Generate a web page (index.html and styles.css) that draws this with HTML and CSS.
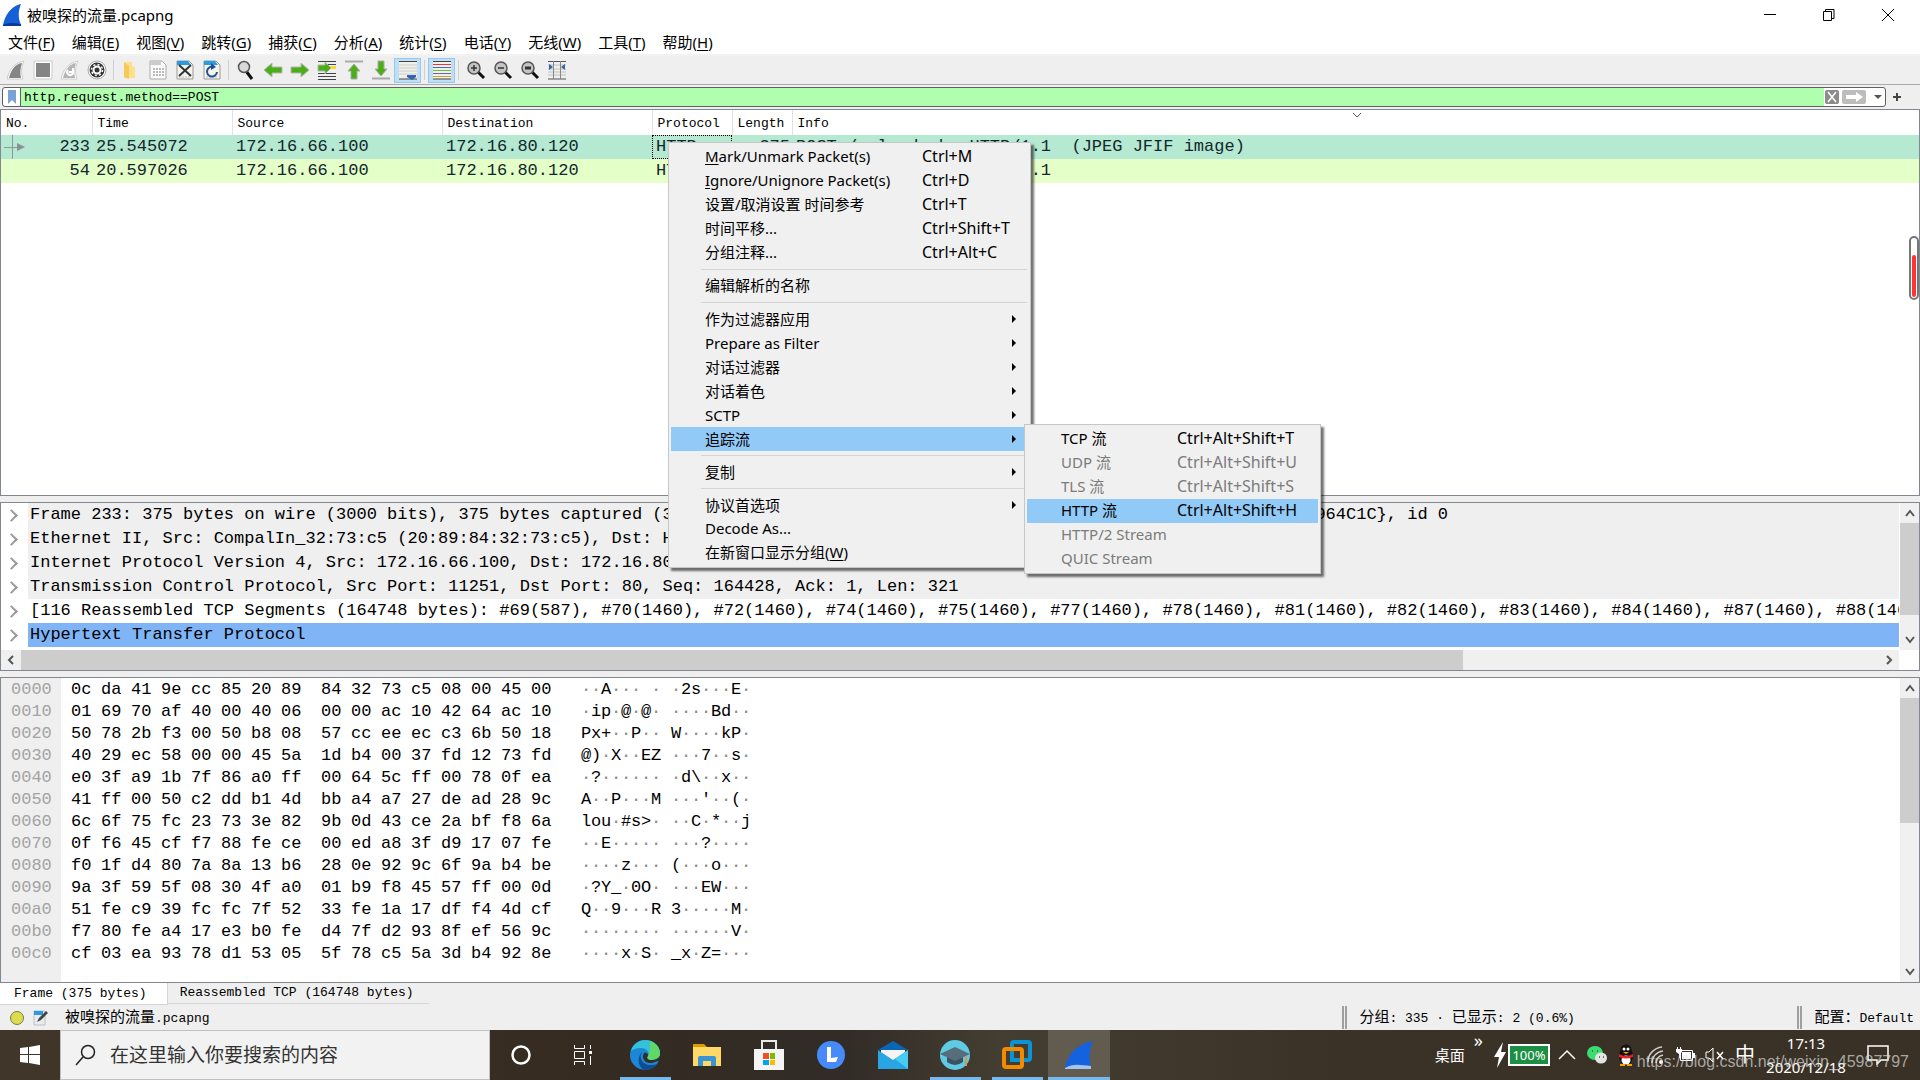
FILE: index.html
```html
<!DOCTYPE html>
<html lang="zh-CN">
<head>
    <meta charset="UTF-8">
    <meta name="viewport" content="width=device-width, initial-scale=1.0">
    <title>被嗅探的流量.pcapng</title>
    <link rel="stylesheet" href="styles.css">
</head>
<body>
    <header class="titlebar">
        <svg class="app-icon" width="20" height="24" viewBox="0 0 20 24"><path d="M1 22C3 12 9 3 19 1c-3 7-3 14 0 21z" fill="#1560d8"/><path d="M1 22c5-3 12-2 18-1v2H1z" fill="#0a3a9c"/></svg>
        <h1>被嗅探的流量.pcapng</h1>
        <div class="window-buttons">
            <button aria-label="最小化"><svg width="14" height="14"><path d="M1 6.500h12" stroke="#000" stroke-width="1"/></svg></button>
            <button aria-label="还原"><svg width="14" height="14"><path d="M1.500 3.500h8v9h-8zM3.500 3V1.500h8.500v9H10" fill="none" stroke="#000"/></svg></button>
            <button aria-label="关闭"><svg width="14" height="14"><path d="M1 1l12 12M13 1L1 13" stroke="#000"/></svg></button>
        </div>
    </header>

    <nav class="menubar">
        <button>文件(<u>F</u>)</button>
        <button>编辑(<u>E</u>)</button>
        <button>视图(<u>V</u>)</button>
        <button>跳转(<u>G</u>)</button>
        <button>捕获(<u>C</u>)</button>
        <button>分析(<u>A</u>)</button>
        <button>统计(<u>S</u>)</button>
        <button>电话(<u>Y</u>)</button>
        <button>无线(<u>W</u>)</button>
        <button>工具(<u>T</u>)</button>
        <button>帮助(<u>H</u>)</button>
    </nav>

    <div class="toolbar">
        <button aria-label="开始"><svg width="20" height="20"><path d="M1 19C3 10 8 3 18 1c-3 6-3 12-1 18z" fill="#fff" stroke="#ccc"/><path d="M3 18C5 10 9 4 16 3c-2 6-2 10-1 15z" fill="#858585"/></svg></button>
        <button aria-label="停止"><svg width="20" height="20"><path d="M1 1h18v18H1z" fill="#fff" stroke="#ccc"/><path d="M3 3h14v14H3z" fill="#858585"/></svg></button>
        <button aria-label="重新开始"><svg width="20" height="20"><path d="M1 19C3 10 8 3 18 1c-3 6-3 12-1 18z" fill="#fff" stroke="#ccc"/><path d="M3 18C5 10 9 4 16 3c-2 6-2 10-1 15z" fill="#b5b5b5"/><path d="M8 10a3 3 0 1 0 5 1M13 8v4H9" fill="none" stroke="#fff" stroke-width="2"/></svg></button>
        <button aria-label="捕获选项"><svg width="20" height="20"><circle cx="10" cy="10" r="9" fill="#fff" stroke="#aaa"/><circle cx="10" cy="10" r="7.500" fill="#333"/><circle cx="10" cy="10" r="3.500" fill="none" stroke="#fff" stroke-width="2"/><circle cx="10" cy="10" r="5.500" fill="none" stroke="#fff" stroke-width="1.500" stroke-dasharray="2 2.300"/></svg></button>
        <span class="divider"></span>
        <button aria-label="打开"><svg width="20" height="20"><path d="M3 2h8v4l3 1v11H3z" fill="#ffe08a"/><path d="M3 2l5 4v13l-5-2z" fill="#f5c95a"/></svg></button>
        <button aria-label="保存"><svg width="20" height="20"><path d="M2 1h12l4 4v14H2z" fill="#fbfbfb" stroke="#aaa"/><path d="M2 1h11v4H2z" fill="#ccc"/><path d="M5 9h11M5 12h11M5 15h11" stroke="#bbb" stroke-width="2" stroke-dasharray="2 1"/></svg></button>
        <button aria-label="关闭文件"><svg width="20" height="20"><path d="M2 1h12l4 4v14H2z" fill="#f6f5e8" stroke="#999"/><path d="M2 1h11l3 4H2z" fill="#2a9be0"/><path d="M4 17h12" stroke="#bbb" stroke-dasharray="2 1"/><path d="M4 5l12 11M16 5L4 16" stroke="#2c343c" stroke-width="2"/></svg></button>
        <button aria-label="重新加载"><svg width="20" height="20"><path d="M2 1h12l4 4v14H2z" fill="#f6f5e8" stroke="#999"/><path d="M2 1h11l3 4H2z" fill="#2a9be0"/><path d="M4 17h12" stroke="#bbb" stroke-dasharray="2 1"/><path d="M12 7a5 5 0 1 0 3 5" fill="none" stroke="#1f4f9a" stroke-width="2"/><path d="M9 3l5 4-5 3z" fill="#1f4f9a"/></svg></button>
        <span class="divider"></span>
        <button aria-label="查找"><svg width="20" height="20"><path d="M10 11l6 8" stroke="#111" stroke-width="3"/><circle cx="8" cy="7" r="5.500" fill="#d8d8d8" stroke="#555" stroke-width="1.500"/></svg></button>
        <button aria-label="后退"><svg width="20" height="20"><path d="M1 10l8-7v4h10v6H9v4z" fill="#4cae16" stroke="#b5b5b5"/></svg></button>
        <button aria-label="前进"><svg width="20" height="20"><path d="M19 10l-8-7v4H1v6h10v4z" fill="#4cae16" stroke="#b5b5b5"/></svg></button>
        <button aria-label="转到分组"><svg width="20" height="20"><path d="M1 1.500h18M8 4.500h11M1 13.500h18M1 16.500h18M1 19.500h18" stroke="#444"/><path d="M13 6h6v3h-6z" fill="#f6d936"/><path d="M14 8L8 2v3H1v6h7v3z" fill="#4cae16" stroke="#b5b5b5"/></svg></button>
        <button aria-label="首个分组"><svg width="20" height="20"><path d="M1 1.500h18" stroke="#aaa" stroke-width="2"/><path d="M10 4l6 7h-3v8H7v-8H4z" fill="#4cae16" stroke="#aaa"/></svg></button>
        <button aria-label="最新分组"><svg width="20" height="20"><path d="M1 18.500h18" stroke="#aaa" stroke-width="2"/><path d="M10 16l6-7h-3V1H7v8H4z" fill="#4cae16" stroke="#aaa"/></svg></button>
        <button class="pressed" aria-label="自动滚动"><svg width="20" height="20"><path d="M1 2h18v17H1z" fill="#f0f0ea"/><path d="M1 1.500h18M1 19h18" stroke="#444"/><path d="M1 5h18M1 8h18M1 11h18M1 14h18" stroke="#ccc"/><path d="M9 15h9v2l-4 3-5-3z" fill="#2f66b0"/></svg></button>
        <span class="divider"></span>
        <button class="pressed" aria-label="着色"><svg width="20" height="20"><path d="M1 2h18v17H1z" fill="#f0f0ea"/><path d="M1 1.500h18M1 19h18" stroke="#444"/><path d="M1 4.500h18" stroke="#e33"/><path d="M1 7.500h18" stroke="#3a70c8"/><path d="M1 10.500h18" stroke="#6cbf2e"/><path d="M1 13.500h18" stroke="#6c62ae"/><path d="M1 16.500h18" stroke="#c9a52f"/></svg></button>
        <span class="divider"></span>
        <button aria-label="放大"><svg width="20" height="20"><path d="M12 12l6 6" stroke="#111" stroke-width="3"/><circle cx="8" cy="8" r="6" fill="#c4c4c4" stroke="#555" stroke-width="1.500"/><path d="M5 8h6M8 5v6" stroke="#333" stroke-width="1.500"/></svg></button>
        <button aria-label="缩小"><svg width="20" height="20"><path d="M12 12l6 6" stroke="#111" stroke-width="3"/><circle cx="8" cy="8" r="6" fill="#c4c4c4" stroke="#555" stroke-width="1.500"/><path d="M5 8h6" stroke="#333" stroke-width="1.500"/></svg></button>
        <button aria-label="正常大小"><svg width="20" height="20"><path d="M12 12l6 6" stroke="#111" stroke-width="3"/><circle cx="8" cy="8" r="6" fill="#c4c4c4" stroke="#555" stroke-width="1.500"/><path d="M5 8h6" stroke="#333" stroke-width="3"/></svg></button>
        <button aria-label="调整列宽"><svg width="20" height="20"><path d="M1 1.500h18M1 19h18" stroke="#555"/><path d="M1 5h18M1 9h18M1 12h18M1 15h18" stroke="#c2c2b6"/><path d="M6.500 1v18M13.500 1v18" stroke="#888"/><path d="M2 4l4 3-4 3zM18 4l-4 3 4 3z" fill="#2f66b0"/></svg></button>
    </div>

    <form class="filter-row">
        <div class="filter-box">
            <button type="button" class="bookmark" aria-label="书签"><svg width="10" height="14"><path d="M1 0h8v14l-4-4-4 4z" fill="#7ba2d6"/></svg></button>
            <input type="text" class="filter-input" aria-label="显示过滤器" value="http.request.method==POST">
            <button type="button" class="clear" aria-label="清除"><svg width="14" height="14"><rect width="14" height="14" rx="2" fill="#8c8c8c"/><path d="M3 2l8 10M11 2L3 12" stroke="#fff" stroke-width="1.500"/></svg></button>
            <button type="button" aria-label="应用"><svg width="24" height="14"><rect width="24" height="14" rx="2" fill="#bdbdbd"/><path d="M4 5h10V2l7 5-7 5V9H4z" fill="#fff"/></svg></button>
            <button type="button" class="history" aria-label="历史"><svg width="8" height="4"><path d="M0 0h8L4 4z" fill="#555"/></svg></button>
        </div>
        <button type="button" class="add-filter" aria-label="添加"><svg width="10" height="10"><path d="M5 1v8M1 5h8" stroke="#444" stroke-width="2"/></svg></button>
    </form>

    <main class="panes">
        <section class="pane packet-list">
            <table>
                <colgroup>
                    <col class="c-no"><col class="c-time"><col class="c-addr"><col class="c-addr"><col class="c-proto"><col class="c-len"><col>
                </colgroup>
                <thead>
                    <tr><th>No.</th><th>Time</th><th>Source</th><th>Destination</th><th>Protocol</th><th>Length</th><th>Info</th></tr>
                </thead>
                <tbody>
                    <tr class="selected">
                        <td class="num"><svg class="related" width="24" height="24"><path d="M3 12.500h16M11.500 0v24" stroke="#8a9a9c"/><path d="M16 8l8 4-8 4z" fill="#8a8f98"/></svg>233</td>
                        <td>25.545072</td><td>172.16.66.100</td><td>172.16.80.120</td><td class="focus">HTTP</td><td class="num">375</td>
                        <td>POST /upload.php HTTP/1.1  (JPEG JFIF image)</td>
                    </tr>
                    <tr>
                        <td class="num">54</td>
                        <td>20.597026</td><td>172.16.66.100</td><td>172.16.80.120</td><td>HTTP</td><td class="num">640</td>
                        <td>POST /upload.php HTTP/1.1</td>
                    </tr>
                </tbody>
            </table>
            <svg class="sort-mark" width="10" height="6"><path d="M1 1l4 4 4-4" fill="none" stroke="#555"/></svg>
            <div class="gauge"><div class="gauge-level"></div></div>
        </section>

        <section class="pane details">
            <ul class="tree">
                <li><span>Frame 233: 375 bytes on wire (3000 bits), 375 bytes captured (3000 bits) on interface \Device\NPF_{5A1E7C02-61B4-4F0E-9C3D-7B1964C1C}, id 0</span></li>
                <li><span>Ethernet II, Src: CompalIn_32:73:c5 (20:89:84:32:73:c5), Dst: Hangzhou_9e:cc:85 (0c:da:41:9e:cc:85)</span></li>
                <li><span>Internet Protocol Version 4, Src: 172.16.66.100, Dst: 172.16.80.120</span></li>
                <li><span>Transmission Control Protocol, Src Port: 11251, Dst Port: 80, Seq: 164428, Ack: 1, Len: 321</span></li>
                <li class="plain"><span>[116 Reassembled TCP Segments (164748 bytes): #69(587), #70(1460), #72(1460), #74(1460), #75(1460), #77(1460), #78(1460), #81(1460), #82(1460), #83(1460), #84(1460), #87(1460), #88(1460),</span></li>
                <li class="current"><span>Hypertext Transfer Protocol</span></li>
            </ul>
            <div class="vscroll">
                <button aria-label="向上"><svg width="10" height="8"><path d="M1 7l4-5 4 5" fill="none" stroke="#555" stroke-width="2"/></svg></button>
                <div class="thumb details-thumb"></div>
                <button aria-label="向下"><svg width="10" height="8"><path d="M1 1l4 5 4-5" fill="none" stroke="#555" stroke-width="2"/></svg></button>
            </div>
            <div class="hscroll">
                <button aria-label="向左"><svg width="8" height="10"><path d="M6 1L2 5l4 4" fill="none" stroke="#555" stroke-width="2"/></svg></button>
                <div class="thumb"></div>
                <button aria-label="向右"><svg width="8" height="10"><path d="M2 1l4 4-4 4" fill="none" stroke="#555" stroke-width="2"/></svg></button>
            </div>
        </section>

        <section class="pane bytes">
            <div class="hex" id="hex"></div>
            <div class="vscroll">
                <button aria-label="向上"><svg width="10" height="8"><path d="M1 7l4-5 4 5" fill="none" stroke="#555" stroke-width="2"/></svg></button>
                <div class="thumb bytes-thumb"></div>
                <button aria-label="向下"><svg width="10" height="8"><path d="M1 1l4 5 4-5" fill="none" stroke="#555" stroke-width="2"/></svg></button>
            </div>
        </section>
    </main>

    <div class="tabs">
        <button class="tab active">Frame (375 bytes)</button>
        <button class="tab">Reassembled TCP (164748 bytes)</button>
    </div>

    <footer class="statusbar">
        <svg width="16" height="16"><circle cx="8" cy="8" r="6.500" fill="#dcdc50" stroke="#7c7c3c"/></svg>
        <svg width="16" height="16"><path d="M1 1h11v14H1z" fill="#e9ecec" stroke="#b8c0c4"/><path d="M1 1h9v4H1z" fill="#2a9be0"/><path d="M4 12l2-4 7-7 2 2-7 7z" fill="#444"/></svg>
        <span class="file-name"><span class="cjk">被嗅探的流量</span>.pcapng</span>
        <span class="status-part packets"><span class="cjk">分组</span>: 335 · <span class="cjk">已显示</span>: 2 (0.6%)</span>
        <span class="status-part"><span class="cjk">配置：</span>Default</span>
    </footer>

    <div class="taskbar">
        <button class="start" aria-label="开始菜单"><svg width="20" height="20"><path d="M0 3l8-1v7H0zM9 2l11-2v9H9zM0 10h8v8l-8-1zM9 10h11v10L9 18z" fill="#fff"/></svg></button>
        <label class="search">
            <svg width="22" height="22"><circle cx="13" cy="8" r="6.500" fill="none" stroke="#222" stroke-width="1.500"/><path d="M8 13l-7 8" stroke="#222" stroke-width="1.500"/></svg>
            <input type="text" placeholder="在这里输入你要搜索的内容" aria-label="搜索">
        </label>
        <button class="task" aria-label="Cortana"><svg width="22" height="22"><circle cx="11" cy="11" r="8.500" fill="none" stroke="#fff" stroke-width="2.500"/></svg></button>
        <button class="task" aria-label="任务视图"><svg width="22" height="22"><path d="M2.500 1v3.500h10V1M2.500 7.500h10v7h-10zM2.500 21v-3.500h10V21M18.500 1v4M18.500 12v9" fill="none" stroke="#fff"/><path d="M17 7h3v3h-3z" fill="#fff"/></svg></button>
        <button class="task running" aria-label="Edge"><svg width="30" height="30" viewBox="0 0 30 30"><circle cx="15" cy="15" r="15" fill="#1b87d6"/><path d="M1 11C3 4 9 0 15 0c9 0 15 6 15 13 0 5-4 7-8 7-4 0-6-2-4-4 2-3-1-8-7-8-4 0-8 1-10 3z" fill="#35c1d8"/><path d="M20 1c6 2 10 7 10 12 0 5-4 7-8 7-4 0-6-2-4-4 3-5 2-10 2-15z" fill="#5fd865"/><path d="M12 12c-4 6 1 14 10 13 3 0 5-1 6-2-4 6-9 7-13 7C9 29 6 18 12 12z" fill="#0e4d92"/><path d="M14 13c-3 5 1 11 8 10l6-2c2 1 2-3 2-5-3 4-7 4-9 4-3 0-5-2-3-4 1-2-2-4-4-3z" fill="#33302a"/></svg></button>
        <button class="task" aria-label="文件资源管理器"><svg width="30" height="26" viewBox="0 0 30 26"><path d="M1 2h11l3 3H1z" fill="#dc9c00"/><path d="M1 5h28v19H1z" fill="#ffd868"/><path d="M6 24V16q0-2 2-2h14q2 0 2 2v8h-5v-5h-8v5z" fill="#3b93d4"/></svg></button>
        <button class="task" aria-label="应用商店"><svg width="30" height="32" viewBox="0 0 30 32"><path d="M8 11V2h14v9" fill="none" stroke="#e8e8e8" stroke-width="2"/><path d="M0 10h30v21H0z" fill="#f4f4f4"/><path d="M9 14h6v6H9z" fill="#f25022"/><path d="M16 14h5v6h-5z" fill="#7fba00"/><path d="M9 21h6v5H9z" fill="#00a4ef"/><path d="M16 21h5v5h-5z" fill="#ffb900"/></svg></button>
        <button class="task" aria-label="联想"><svg width="28" height="28"><circle cx="14" cy="14" r="14" fill="#478bfb"/><path d="M10 6h4v11l7-1-2 5h-9z" fill="#fff"/></svg></button>
        <button class="task" aria-label="邮件"><svg width="30" height="30"><path d="M0 10L15 1l15 9z" fill="#0a66b4"/><path d="M3 10h24v10H3z" fill="#f4f4f4"/><path d="M0 10l15 10 15-10v19H0z" fill="#2aa5e4"/><path d="M30 10v19L17 19z" fill="#46cdf6"/></svg></button>
        <button class="task running" aria-label="学习"><svg width="30" height="30"><circle cx="15" cy="15" r="15" fill="#5fcae3"/><path d="M7 14h16v8q-8 6-16 0z" fill="#3b5360"/><path d="M15 7L0 14l15 7 15-7z" fill="#566d7b"/><path d="M26 16v10" stroke="#d9964a" stroke-width="2"/></svg></button>
        <button class="task running" aria-label="VMware"><svg width="30" height="30"><rect x="10" y="2" width="18" height="18" rx="2" fill="none" stroke="#0a94d6" stroke-width="4"/><rect x="2" y="9" width="18" height="18" rx="2" fill="none" stroke="#f38b00" stroke-width="4"/><path d="M10 14v6h6" fill="none" stroke="#0a94d6" stroke-width="4"/></svg></button>
        <button class="task running focused" aria-label="Wireshark"><svg width="30" height="30"><path d="M1 28C4 15 12 4 29 1c-4 8-4 18-2 27z" fill="#1462dd"/><path d="M1 28c8-5 16-3 26-2v3H1z" fill="#a8c3ee"/></svg></button>

        <div class="tray">
            <span>桌面</span>
            <span class="more">»</span>
            <svg width="12" height="28"><path d="M9 1L0 16h5L3 27l9-16H7z" fill="#fff"/></svg>
            <span class="battery">100%</span>
            <svg class="tray-icon" width="20" height="20"><path d="M2 14l8-8 8 8" fill="none" stroke="#fff" stroke-width="1.500"/></svg>
            <svg class="tray-icon" width="20" height="20"><ellipse cx="8" cy="8" rx="8" ry="7" fill="#3ddc70"/><ellipse cx="14" cy="13" rx="6" ry="5.500" fill="#e4e4e4"/><path d="M5 6h1M10 6h1M12 12h1M16 12h1" stroke="#26633b" stroke-width="1.500"/></svg>
            <svg class="tray-icon" width="18" height="22"><ellipse cx="9" cy="12" rx="7" ry="9" fill="#111"/><circle cx="9" cy="6" r="5.500" fill="#111"/><ellipse cx="9" cy="16" rx="4.500" ry="4.500" fill="#fff"/><path d="M2 10q7 4 14 0v3q-7 3-14 0z" fill="#e8222a"/><circle cx="7" cy="5" r="1.500" fill="#fff"/><circle cx="11" cy="5" r="1.500" fill="#fff"/><path d="M6 8h6l-3 2zM3 20h5v2H3zM10 20h5v2h-5z" fill="#f6a400"/></svg>
            <svg class="tray-icon" width="20" height="20"><path d="M3 17C3 9 9 3 17 2M7 18c0-6 4-11 11-12M11 18c0-4 3-7 7-8" fill="none" stroke="#ccc" stroke-width="1.500"/><circle cx="16" cy="17" r="2" fill="#fff"/></svg>
            <svg class="tray-icon" width="20" height="20"><path d="M5.500 5.500h12v10h-12z" fill="none" stroke="#fff"/><path d="M7 7h9v7H7zM18 8h2v5h-2z" fill="#fff"/><path d="M1 4h6v3L5 9v4H4V9L1 7z" fill="#fff"/><path d="M2.500 2v2M5.500 2v2" stroke="#fff"/></svg>
            <svg class="tray-icon" width="20" height="20"><path d="M1 7h3l4-4v14l-4-4H1z" fill="none" stroke="#fff"/><path d="M12 7l6 7M18 7l-6 7" stroke="#fff" stroke-width="1.500"/></svg>
            <span class="ime">中</span>
            <span class="clock"><span>17:13</span><span>2020/12/18</span></span>
            <svg class="notice" width="22" height="20"><path d="M1 1h20v14h-7l-4 4v-4H1z" fill="none" stroke="#fff" stroke-width="1.500"/></svg>
        </div>
        <span class="watermark">https://blog.csdn.net/weixin_45987797</span>
    </div>

    <ul class="menu context-menu">
        <li><button><span><u>M</u>ark/Unmark Packet(s)</span><kbd>Ctrl+M</kbd></button></li>
        <li><button><span><u>I</u>gnore/Unignore Packet(s)</span><kbd>Ctrl+D</kbd></button></li>
        <li><button><span>设置/取消设置 时间参考</span><kbd>Ctrl+T</kbd></button></li>
        <li><button><span>时间平移...</span><kbd>Ctrl+Shift+T</kbd></button></li>
        <li><button><span>分组注释...</span><kbd>Ctrl+Alt+C</kbd></button></li>
        <li class="line"></li>
        <li><button><span>编辑解析的名称</span></button></li>
        <li class="line"></li>
        <li><button class="parent"><span>作为过滤器应用</span></button></li>
        <li><button class="parent"><span>Prepare as Filter</span></button></li>
        <li><button class="parent"><span>对话过滤器</span></button></li>
        <li><button class="parent"><span>对话着色</span></button></li>
        <li><button class="parent"><span>SCTP</span></button></li>
        <li><button class="parent hover"><span>追踪流</span></button></li>
        <li class="line"></li>
        <li><button class="parent"><span>复制</span></button></li>
        <li class="line"></li>
        <li><button class="parent"><span>协议首选项</span></button></li>
        <li><button><span>Decode As...</span></button></li>
        <li><button><span>在新窗口显示分组(<u>W</u>)</span></button></li>
    </ul>

    <ul class="menu submenu">
        <li><button><span>TCP 流</span><kbd>Ctrl+Alt+Shift+T</kbd></button></li>
        <li><button disabled><span>UDP 流</span><kbd>Ctrl+Alt+Shift+U</kbd></button></li>
        <li><button disabled><span>TLS 流</span><kbd>Ctrl+Alt+Shift+S</kbd></button></li>
        <li><button class="hover"><span>HTTP 流</span><kbd>Ctrl+Alt+Shift+H</kbd></button></li>
        <li><button disabled><span>HTTP/2 Stream</span></button></li>
        <li><button disabled><span>QUIC Stream</span></button></li>
    </ul>

    <script>
        const dump = [
            '0c da 41 9e cc 85 20 89 84 32 73 c5 08 00 45 00',
            '01 69 70 af 40 00 40 06 00 00 ac 10 42 64 ac 10',
            '50 78 2b f3 00 50 b8 08 57 cc ee ec c3 6b 50 18',
            '40 29 ec 58 00 00 45 5a 1d b4 00 37 fd 12 73 fd',
            'e0 3f a9 1b 7f 86 a0 ff 00 64 5c ff 00 78 0f ea',
            '41 ff 00 50 c2 dd b1 4d bb a4 a7 27 de ad 28 9c',
            '6c 6f 75 fc 23 73 3e 82 9b 0d 43 ce 2a bf f8 6a',
            '0f f6 45 cf f7 88 fe ce 00 ed a8 3f d9 17 07 fe',
            'f0 1f d4 80 7a 8a 13 b6 28 0e 92 9c 6f 9a b4 be',
            '9a 3f 59 5f 08 30 4f a0 01 b9 f8 45 57 ff 00 0d',
            '51 fe c9 39 fc fc 7f 52 33 fe 1a 17 df f4 4d cf',
            'f7 80 fe a4 17 e3 b0 fe d4 7f d2 93 8f ef 56 9c',
            'cf 03 ea 93 78 d1 53 05 5f 78 c5 5a 3d b4 92 8e'
        ];

        function addSpan(parent, className, text) {
            const span = document.createElement('span');
            span.className = className;
            span.textContent = text;
            parent.appendChild(span);
            return span;
        }

        // One row: offset, two groups of eight bytes, then the same bytes as ASCII
        dump.forEach((line, i) => {
            const row = document.createElement('div');
            row.className = 'hex-row';
            addSpan(row, 'offset', (i * 16).toString(16).padStart(4, '0'));
            const bytes = line.split(' ');
            [bytes.slice(0, 8), bytes.slice(8)].forEach(half => {
                const group = addSpan(row, 'byte-group', '');
                half.forEach(b => addSpan(group, 'byte', b));
            });
            [bytes.slice(0, 8), bytes.slice(8)].forEach(half => {
                const group = addSpan(row, 'ascii', '');
                half.forEach(b => {
                    const code = parseInt(b, 16);
                    const printable = code >= 32 && code < 127;
                    addSpan(group, printable ? '' : 'dot', printable ? String.fromCharCode(code) : '·');
                });
            });
            document.getElementById('hex').appendChild(row);
        });
    </script>
</body>
</html>
```

FILE: styles.css
```css
* {
    margin: 0;
    padding: 0;
    box-sizing: border-box;
}

body {
    position: relative;
    display: flex;
    flex-direction: column;
    height: 100vh;
    overflow: hidden;
    background: #fff;
    color: #000;
    font: 15px/24px "Noto Sans", "Noto Sans CJK SC", sans-serif;
}

button,
input {
    border: none;
    background: none;
    color: inherit;
    font: inherit;
}

ul {
    list-style: none;
}

svg {
    display: block;
    flex: none;
}

u {
    text-underline-offset: 2px;
}

/* Title and menus */
.titlebar {
    display: flex;
    align-items: center;
    height: 29px;
    padding-left: 2px;
}

.titlebar h1 {
    flex: 1;
    margin-left: 5px;
    font-size: 15px;
    font-weight: normal;
}

.window-buttons {
    display: flex;
}

.window-buttons button {
    display: flex;
    justify-content: center;
    width: 59px;
}

.window-buttons button:last-child {
    margin-right: 3px;
}

.menubar {
    display: flex;
    gap: 1px;
    height: 27px;
    border-bottom: 2px solid #f2f2f2;
}

.menubar button {
    padding: 0 8px;
}

.toolbar {
    display: flex;
    align-items: center;
    height: 29px;
    padding-left: 2px;
    background: #efefef;
    border-bottom: 1px solid #a9a9a9;
}

.toolbar button {
    display: flex;
    align-items: center;
    justify-content: center;
    width: 27px;
    height: 25px;
}

.toolbar .pressed {
    background: #c2def5;
    border: 1px solid #90c8f6;
}

.divider {
    width: 1px;
    height: 20px;
    margin: 0 3px;
    background: #cfcfcf;
}

/* Display filter */
.filter-row {
    display: flex;
    align-items: center;
    height: 24px;
    padding: 1px 18px 1px 2px;
    background: #efefef;
}

.filter-box {
    display: flex;
    flex: 1;
    align-items: center;
    height: 20px;
    background: #fff;
    border: 1px solid #606060;
    border-radius: 3px;
    overflow: hidden;
}

.filter-box button {
    margin-left: 3px;
}

.filter-box .bookmark {
    display: flex;
    justify-content: center;
    width: 17px;
    margin: 0;
}

.filter-box .clear {
    margin-left: 1px;
}

.filter-input {
    flex: 1;
    align-self: stretch;
    padding-left: 3px;
    background: #afffaf;
    border-left: 1px solid #606060;
    font: 13px "Liberation Mono", monospace;
    outline: none;
}

.filter-box .history {
    padding: 0 3px 0 5px;
}

.add-filter {
    margin-left: 6px;
}

/* Three stacked panes */
.panes {
    display: flex;
    flex: 1;
    flex-direction: column;
    gap: 6px;
    min-height: 0;
    background: #efefef;
}

.pane {
    position: relative;
    background: #fff;
    border: 1px solid #828790;
    font: 17px/24px "Liberation Mono", monospace;
    overflow: hidden;
}

.packet-list {
    flex: 386 1 0;
}

.packet-list table {
    width: 100%;
    table-layout: fixed;
    border-collapse: collapse;
    white-space: pre;
}

.c-no {
    width: 91px;
}

.c-time {
    width: 140px;
}

.c-addr {
    width: 210px;
}

.c-proto {
    width: 80px;
}

.c-len {
    width: 60px;
}

.packet-list th {
    height: 25px;
    padding: 2px 0 0 5px;
    border-right: 1px solid #e2e2e2;
    font-size: 13px;
    font-weight: normal;
    line-height: 23px;
    text-align: left;
}

.packet-list th:last-child {
    border-right: none;
}

.packet-list td {
    position: relative;
    height: 24px;
    padding-left: 4px;
    color: #12272e;
}

.packet-list tbody tr {
    background: #e4ffc7;
}

.packet-list tbody .selected {
    background: #b6e9d1;
}

.packet-list .num {
    padding-right: 2px;
    text-align: right;
}

.packet-list .focus {
    outline: 1px dotted #000;
    outline-offset: -1px;
}

.related {
    position: absolute;
    top: 0;
    left: 0;
}

.sort-mark {
    position: absolute;
    top: 2px;
    right: 557px;
}

.gauge {
    position: absolute;
    top: 126px;
    right: 0;
    display: flex;
    align-items: flex-end;
    width: 10px;
    height: 64px;
    padding: 1px;
    background: #fff;
    border: 2px solid #777;
    border-radius: 5px;
}

.gauge-level {
    width: 100%;
    height: 42px;
    background: #f33;
    border-radius: 2px;
}

/* Packet details */
.details {
    display: grid;
    grid-template-columns: 1fr 20px;
    grid-template-rows: auto 20px;
}

.tree {
    min-width: 0;
    padding-bottom: 3px;
}

.tree li {
    display: flex;
    align-items: center;
}

.tree li::before {
    content: "";
    flex: none;
    width: 7px;
    height: 7px;
    margin: 0 12px 0 6px;
    border: solid #999;
    border-width: 2px 2px 0 0;
    transform: rotate(45deg);
}

.tree span {
    flex: 1;
    padding-left: 2px;
    background: #efefef;
    white-space: pre;
    overflow: hidden;
}

.tree .plain span {
    background: #fff;
}

.tree .current span {
    background: #7fb5f7;
}

.vscroll,
.hscroll {
    display: flex;
    background: #f0f0f0;
}

.vscroll {
    flex-direction: column;
    border-left: 1px solid #fff;
}

.vscroll button,
.hscroll button {
    display: flex;
    align-items: center;
    justify-content: center;
    width: 20px;
    height: 20px;
}

.vscroll button:last-child {
    margin-top: auto;
}

.hscroll button:last-child {
    margin-left: auto;
}

.thumb {
    background: #cdcdcd;
}

.details-thumb {
    height: 62%;
}

.bytes-thumb {
    height: 41%;
}

.hscroll .thumb {
    width: 76%;
}

/* Packet bytes */
.bytes {
    display: grid;
    grid-template-columns: 1fr 20px;
    flex: 304 1 0;
}

.hex {
    padding-top: 1px;
    background: linear-gradient(to right, #efefef 60px, #fff 60px);
    line-height: 22px;
}

.hex-row {
    display: grid;
    grid-template-columns: 70px 250px 260px 90px 90px;
    height: 22px;
}

.offset {
    padding-left: 10px;
    color: #a3a3a3;
}

.byte-group {
    display: grid;
    grid-template-columns: repeat(8, 30px);
}

.ascii {
    display: grid;
    grid-template-columns: repeat(8, 10px);
    white-space: pre;
}

.dot {
    color: #888;
}

/* Tabs and status */
.tabs {
    display: flex;
    align-items: flex-start;
    height: 22px;
    background: #efefef;
    font: 13px/20px "Liberation Mono", monospace;
}

.tab {
    padding: 0 15px 0 12px;
    border-bottom: 1px solid #d6d6d6;
}

.tab.active {
    padding: 0 20px 0 14px;
    background: #fff;
    border-right: 1px solid #d6d6d6;
    line-height: 21px;
}

.statusbar {
    display: flex;
    align-items: center;
    gap: 8px;
    height: 25px;
    padding: 0 6px 0 9px;
    background: #efefef;
    font: 13px/20px "Liberation Mono", monospace;
}

.cjk {
    font: 15px/20px "Noto Sans CJK SC", sans-serif;
}

.file-name {
    flex: 1;
    margin-left: 8px;
}

.status-part {
    padding-left: 12px;
    border-left: 5px double #a0a0a0;
}

.packets {
    flex: 0 0 447px;
}

/* Taskbar */
.taskbar {
    position: relative;
    display: flex;
    height: 50px;
    background: linear-gradient(to right, #40362a, #352b21 30%, #312c27 44%, #443d31 52%, #3a3226 70%, #393125);
    color: #fff;
}

.start {
    display: flex;
    align-items: center;
    justify-content: center;
    width: 60px;
}

.search {
    display: flex;
    align-items: center;
    width: 430px;
    padding-left: 14px;
    background: #f2f2f2;
    border: 1px solid #c0c0c0;
}

.search input {
    flex: 1;
    min-width: 0;
    padding-left: 13px;
    font-size: 19px;
    outline: none;
}

.search input::placeholder {
    color: #333;
    opacity: 1;
}

.task {
    display: flex;
    align-items: center;
    justify-content: center;
    width: 62px;
    padding-top: 3px;
    border-bottom: 3px solid transparent;
}

.running {
    background: linear-gradient(#76b9ed, #76b9ed) center bottom / 51px 3px no-repeat border-box;
}

.focused {
    background: #625b50;
    border-bottom-color: #76b9ed;
}

.tray {
    display: flex;
    align-items: center;
    margin-left: auto;
    padding-right: 31px;
}

.more {
    align-self: flex-start;
    margin: 0 11px 0 9px;
    font-size: 18px;
    line-height: 20px;
}

.battery {
    width: 42px;
    margin: 0 7px 0 2px;
    background: #1d8f45;
    border: 2px solid #fff;
    font-size: 13px;
    line-height: 18px;
    text-align: center;
}

.tray-icon {
    margin-right: 10px;
}

.ime {
    margin: 0 8px 0 0;
    font-size: 20px;
}

.clock {
    display: flex;
    flex-direction: column;
    width: 86px;
    margin-right: 18px;
    text-align: center;
}

.watermark {
    position: absolute;
    right: 11px;
    bottom: 8px;
    color: rgba(220, 220, 220, 0.7);
    font: 16px/20px "Liberation Sans", sans-serif;
}

/* Popup menus */
.menu {
    position: absolute;
    padding: 2px;
    background: #f0f0f0;
    border: 1px solid #c6c6c6;
    box-shadow: 3px 3px 2px rgba(0, 0, 0, 0.55);
}

.menu button {
    display: grid;
    width: 100%;
    height: 24px;
    padding-left: 34px;
    line-height: 23px;
    text-align: left;
    white-space: nowrap;
}

.menu kbd {
    font-family: inherit;
    font-size: 16px;
}

.menu .line {
    height: 1px;
    margin: 4px 1px 4px 30px;
    background: #d5d5d5;
}

.menu .hover {
    background: #91c9f7;
}

.menu button:disabled {
    color: #7b7b7b;
}

.context-menu {
    top: 142px;
    left: 668px;
    width: 363px;
}

.context-menu button {
    grid-template-columns: 217px 1fr;
}

.context-menu .parent {
    grid-template-columns: 1fr 16px;
    align-items: center;
}

.parent::after {
    content: "";
    width: 0;
    height: 0;
    border: solid transparent;
    border-width: 4px 0 4px 4px;
    border-left-color: #000;
}

.submenu {
    top: 424px;
    left: 1024px;
    width: 297px;
}

.submenu button {
    grid-template-columns: 116px 1fr;
}
```
